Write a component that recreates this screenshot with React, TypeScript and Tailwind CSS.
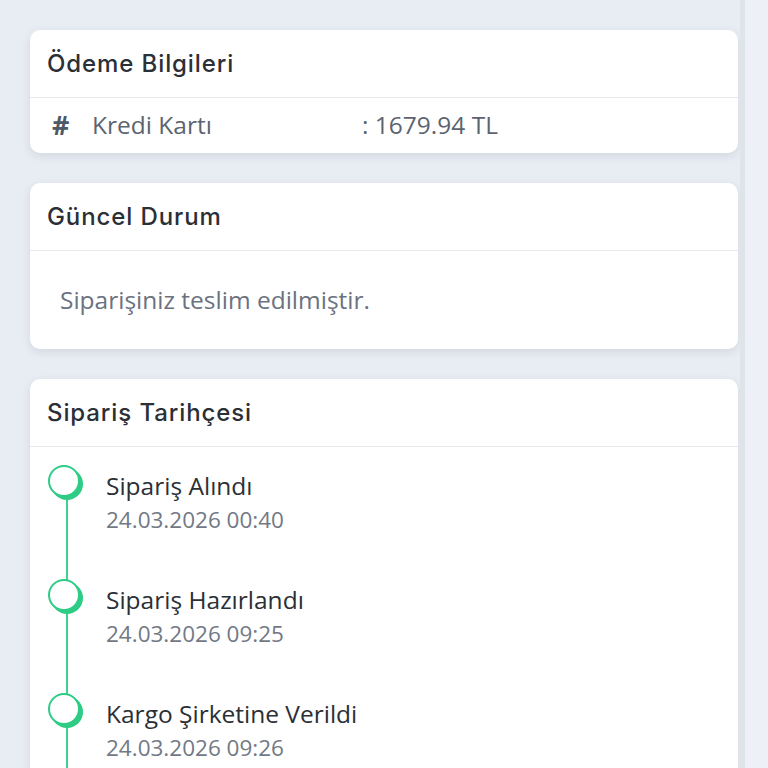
import React from "react";

const heading = { fontFamily: "Inter, 'Noto Sans', sans-serif" };
const body = { fontFamily: "'Open Sans', 'Noto Sans', sans-serif" };

function Card({ title, children }: { title: string; children: React.ReactNode }) {
  return (
    <div className="bg-white rounded-[10px] shadow-[0_3px_10px_rgba(30,40,70,0.10)]">
      <div className="h-[68px] flex items-center px-[17px] border-b border-[#e6e8ec]">
        <h2 className="text-[24px] font-medium text-[#2b2f36] tracking-[0.9px]" style={heading}>
          {title}
        </h2>
      </div>
      {children}
    </div>
  );
}

function Dot() {
  return (
    <svg width="44" height="44" viewBox="0 0 44 44" className="block">
      <circle cx="23" cy="23" r="16" fill="#2ecc85" />
      <circle cx="20" cy="20" r="15" fill="#ffffff" stroke="#2ecc85" strokeWidth="2" />
    </svg>
  );
}

const events = [
  { t: "Sipariş Alındı", d: "24.03.2026 00:40" },
  { t: "Sipariş Hazırlandı", d: "24.03.2026 09:25" },
  { t: "Kargo Şirketine Verildi", d: "24.03.2026 09:26" },
];

export default function App() {
  return (
    <div className="w-[768px] h-[768px] overflow-hidden bg-[#e8ecf3] flex" style={body}>
      <div className="w-[740px] flex flex-col">
        <div className="ml-[30px] mr-[2px] h-[2px] bg-[#a9e3d5] shadow-[0_4px_12px_rgba(30,40,70,0.12)] rounded-b-[10px]" />
        <div className="pl-[30px] pr-[2px] pt-[30px] flex flex-col gap-[30px]">
          <Card title="Ödeme Bilgileri">
            <div className="h-[55px] flex items-center px-[22px] text-[24.5px] text-[#5c6470]">
              <span className="w-[40px] text-[27px] font-bold text-[#4f5866]">#</span>
              <span className="w-[270px]">Kredi Kartı</span>
              <span>: 1679.94 TL</span>
            </div>
          </Card>
          <Card title="Güncel Durum">
            <div className="h-[98px] flex items-center px-[30px] text-[24.5px] text-[#6b7280]">
              Siparişiniz teslim edilmiştir.
            </div>
          </Card>
          <Card title="Sipariş Tarihçesi">
            <div className="relative pt-[14px] pl-[14px] pb-[40px]">
              <div className="absolute left-[36px] top-[40px] bottom-0 w-[2px] bg-[#3fcf8e]" />
              {events.map((e) => (
                <div key={e.t} className="relative flex h-[114px]">
                  <div className="w-[62px]">
                    <Dot />
                  </div>
                  <div className="pt-[8px]">
                    <div className="text-[24.5px] text-[#2b2f36] leading-[34px]">{e.t}</div>
                    <div className="text-[22.5px] text-[#727985] leading-[34px]">{e.d}</div>
                  </div>
                </div>
              ))}
            </div>
          </Card>
        </div>
      </div>
      <div className="w-[5px] bg-[#dfe3ea]" />
      <div className="flex-1 bg-[#edf0f7]" />
    </div>
  );
}
